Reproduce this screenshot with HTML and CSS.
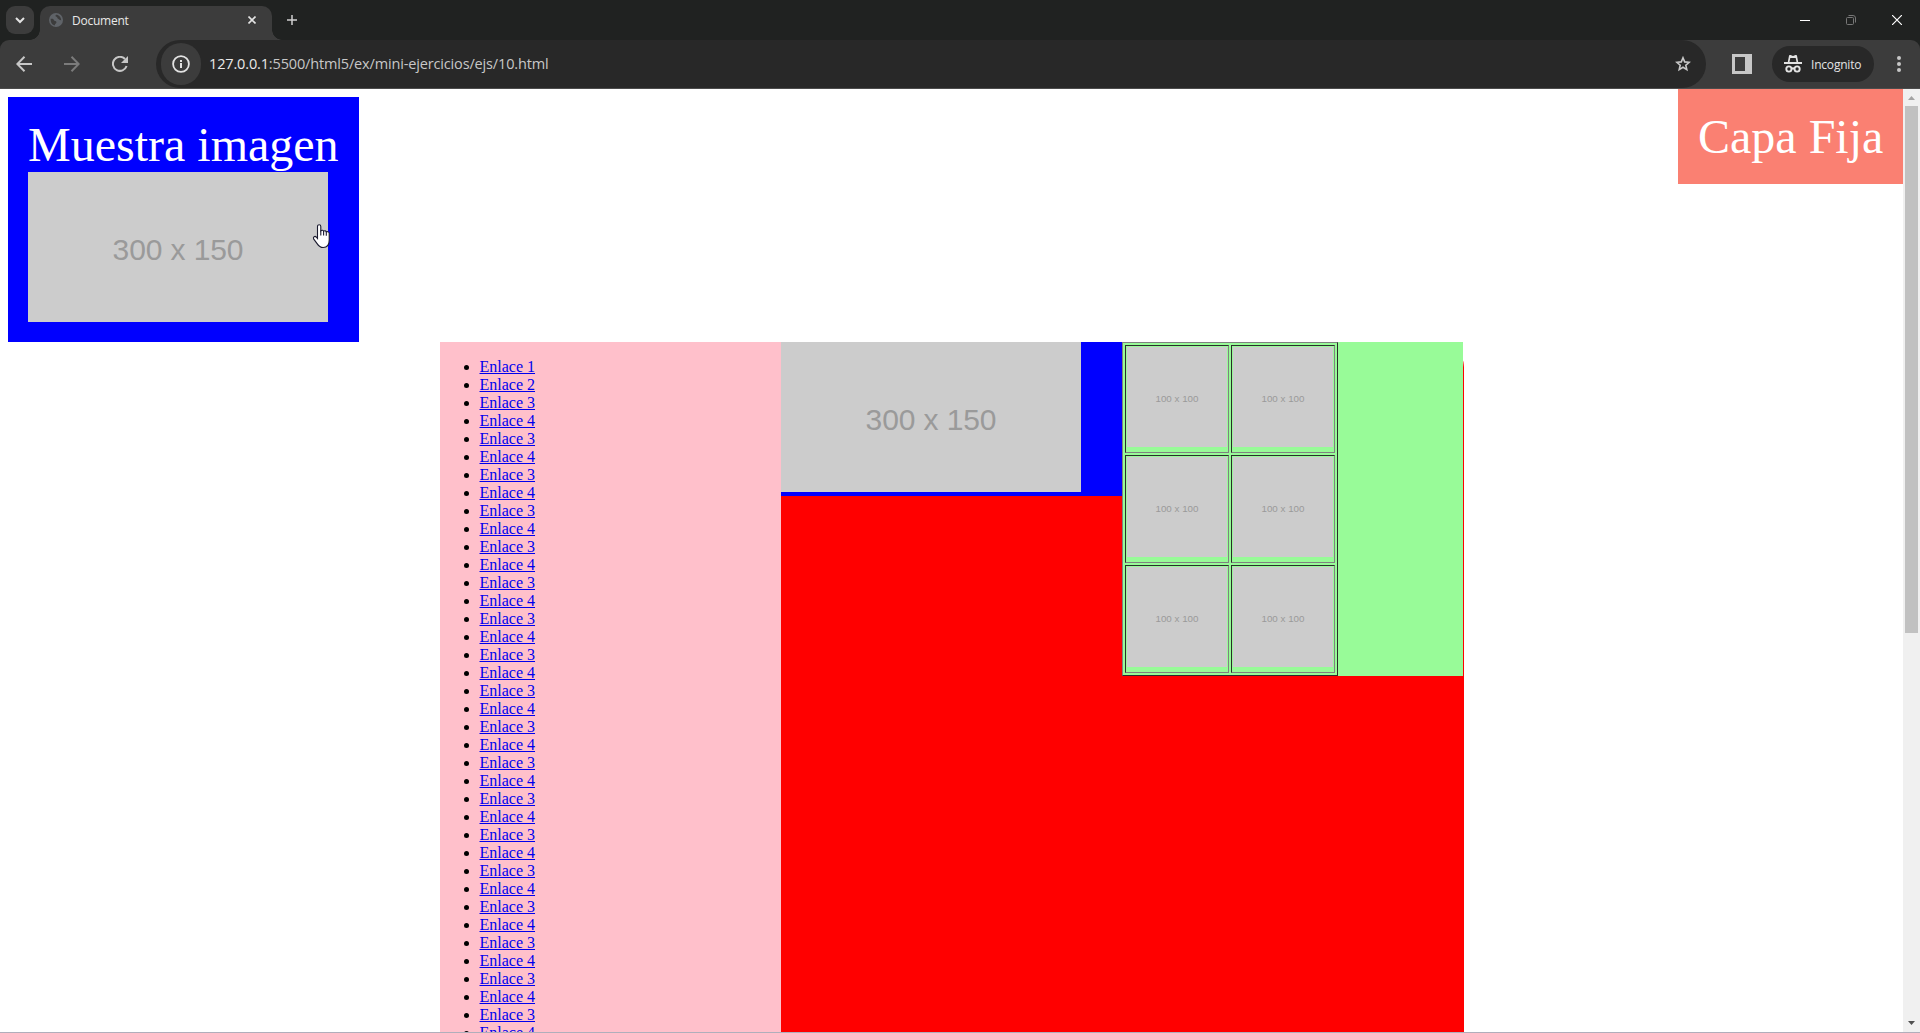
FILE: index.html
```html
<!DOCTYPE html>
<html lang="es">
<head>
<meta charset="utf-8">
<title>Document</title>
<link rel="stylesheet" href="styles.css">
</head>
<body>
<div class="browser">
  <header class="tabs">
    <button class="tab-search"><svg width="28" height="28"><path d="M10 12l4 4 4-4" fill="none" stroke="#e3e3e3" stroke-width="2"/></svg></button>
    <div class="tab">
      <svg width="14" height="14" viewBox="0 0 14 14"><circle cx="7" cy="7" r="7" fill="#5f6368"/><path d="M1.7 5.8c2.2-.5 3 .2 3.3 1.5.2 1 2.7.4 2.4 2.3-.2 1.1-1.5 1-1.6 2.8C3 12 1.4 9.500 1.700 5.800zM7 1.800c-.9 1-.6 1.700.5 1.900 1.200.3.5 1.600 1.400 1.900 1 .4 1.100 1.600 3.300 1.600C12.200 4.500 10 1.800 7 1.800z" fill="#3c3c3c"/></svg>
      <span class="tab-title">Document</span>
      <svg class="tab-close" width="8" height="8"><path d="M.5.5l7 7m0-7l-7 7" stroke="#e3e3e3" stroke-width="1.600"/></svg>
    </div>
    <svg class="new-tab" width="10" height="10"><path d="M5 0v10M0 5h10" stroke="#d0d0d0" stroke-width="1.500"/></svg>
    <div class="window-buttons">
      <svg width="10" height="10"><path d="M0 5.500h10" stroke="#fff"/></svg>
      <svg width="10" height="10"><rect x=".5" y="2.500" width="7" height="7" rx="1" fill="none" stroke="#777"/><path d="M2.500.5H7a2.500 2.500 0 0 1 2.500 2.500v4.500" fill="none" stroke="#777"/></svg>
      <svg width="10" height="10"><path d="M0 0l10 10M10 0L0 10" stroke="#fff" stroke-width="1.200"/></svg>
    </div>
  </header>
  <nav class="toolbar">
    <svg class="nav-icon" width="16" height="16"><path d="M16 8H1.500M8.500 .8L1.300 8l7.200 7.200" fill="none" stroke="#c7c7c7" stroke-width="2"/></svg>
    <svg class="nav-icon" width="16" height="16"><path d="M0 8h14.500M7.500.8L14.700 8l-7.200 7.200" fill="none" stroke="#7b7b7b" stroke-width="2"/></svg>
    <svg class="nav-icon" width="16" height="16"><path d="M14.600 10A7 7 0 1 1 13 3" fill="none" stroke="#c7c7c7" stroke-width="2"/><path d="M16 0v7H9z" fill="#c7c7c7"/></svg>
    <div class="omnibox">
      <span class="site-info"><svg width="18" height="18"><circle cx="9" cy="9" r="7.900" fill="none" stroke="#e3e3e3" stroke-width="1.800"/><path d="M9 8v5M9 5v2" stroke="#e3e3e3" stroke-width="2"/></svg></span>
      <span class="url"><b>127.0.0.1</b>:5500/html5/ex/mini-ejercicios/ejs/10.html</span>
      <svg class="star" width="16" height="16"><path d="M8 1.800l1.700 4.100 4.500.4-3.400 2.900 1 4.400L8 11.300l-3.800 2.300 1-4.400L1.800 6.300l4.500-.4z" fill="none" stroke="#c7c7c7" stroke-width="1.600"/></svg>
    </div>
    <svg class="side-panel" width="20" height="20"><path d="M0 0h20v20H0zM3 3v14h10V3z" fill="#c7c7c7" fill-rule="evenodd"/></svg>
    <div class="incognito">
      <svg width="18" height="18" viewBox="0 0 18 18"><path d="M5 .8c.3-.8.800-1 1.500-.7l2.500.8 2.500-.8c.7-.3 1.200-.1 1.500.7L14.200 7H18v2H0V7h3.800zM6.300 3l-.8 4h7l-.8-4z" fill="#e3e3e3" fill-rule="evenodd"/><g fill="none" stroke="#e3e3e3" stroke-width="1.900"><circle cx="4.900" cy="14" r="2.600"/><circle cx="13.100" cy="14" r="2.600"/><path d="M7.500 14c.8-.7 2.200-.7 3 0"/></g></svg>
      <span>Incognito</span>
    </div>
    <svg class="menu" width="4" height="16"><g fill="#c7c7c7"><circle cx="2" cy="2" r="2"/><circle cx="2" cy="8" r="2"/><circle cx="2" cy="14" r="2"/></g></svg>
  </nav>
  <div class="viewport">
    <main class="page">
      <div class="reveal">Muestra imagen<div class="ph ph-large"><span>300 x 150</span></div></div>
      <div class="container">
        <ul class="links">
          <li><a href="#">Enlace 1</a></li><li><a href="#">Enlace 2</a></li>
          <li><a href="#">Enlace 3</a></li><li><a href="#">Enlace 4</a></li>
          <li><a href="#">Enlace 3</a></li><li><a href="#">Enlace 4</a></li>
          <li><a href="#">Enlace 3</a></li><li><a href="#">Enlace 4</a></li>
          <li><a href="#">Enlace 3</a></li><li><a href="#">Enlace 4</a></li>
          <li><a href="#">Enlace 3</a></li><li><a href="#">Enlace 4</a></li>
          <li><a href="#">Enlace 3</a></li><li><a href="#">Enlace 4</a></li>
          <li><a href="#">Enlace 3</a></li><li><a href="#">Enlace 4</a></li>
          <li><a href="#">Enlace 3</a></li><li><a href="#">Enlace 4</a></li>
          <li><a href="#">Enlace 3</a></li><li><a href="#">Enlace 4</a></li>
          <li><a href="#">Enlace 3</a></li><li><a href="#">Enlace 4</a></li>
          <li><a href="#">Enlace 3</a></li><li><a href="#">Enlace 4</a></li>
          <li><a href="#">Enlace 3</a></li><li><a href="#">Enlace 4</a></li>
          <li><a href="#">Enlace 3</a></li><li><a href="#">Enlace 4</a></li>
          <li><a href="#">Enlace 3</a></li><li><a href="#">Enlace 4</a></li>
          <li><a href="#">Enlace 3</a></li><li><a href="#">Enlace 4</a></li>
          <li><a href="#">Enlace 3</a></li><li><a href="#">Enlace 4</a></li>
          <li><a href="#">Enlace 3</a></li><li><a href="#">Enlace 4</a></li>
          <li><a href="#">Enlace 3</a></li><li><a href="#">Enlace 4</a></li>
        </ul>
        <div class="picture"><div class="ph ph-large"><span>300 x 150</span></div></div>
        <div class="gallery">
          <table>
            <tr><td><div class="ph ph-small"><span>100 x 100</span></div></td><td><div class="ph ph-small"><span>100 x 100</span></div></td></tr>
            <tr><td><div class="ph ph-small"><span>100 x 100</span></div></td><td><div class="ph ph-small"><span>100 x 100</span></div></td></tr>
            <tr><td><div class="ph ph-small"><span>100 x 100</span></div></td><td><div class="ph ph-small"><span>100 x 100</span></div></td></tr>
          </table>
        </div>
      </div>
      <div class="fixed-layer">Capa Fija</div>
    </main>
    <div class="scrollbar">
      <svg width="17" height="17"><path d="M5 11l3.500-4 3.500 4z" fill="#a3a3a3"/></svg>
      <div class="thumb"></div>
      <svg class="down" width="17" height="17"><path d="M5 6l3.500 4L12 6z" fill="#505050"/></svg>
    </div>
  </div>
  <svg class="cursor" width="19" height="25" viewBox="0 0 19 25"><path d="M5.500 14.500V2.500c0-2.400 3.300-2.400 3.300 0v4.300c1-.9 2.500-.6 2.800.3 1-.6 2.400-.3 2.700.7 1.500-.6 2.900.2 2.900 1.800v6.400c0 4.700-2.400 7.500-6 7.500-3.500 0-4.700-1.600-6.100-3.900L1.600 14.900c-.8-1.900 1.300-3.200 2.600-1.900z" fill="#fff" stroke="#1a1a2e" stroke-width="1.100"/><path d="M8.800 6.500v5M11.600 7v4.500M14.300 8v3.700" stroke="#1a1a2e" stroke-width="1.100"/></svg>
</div>
</body>
</html>
```
FILE: styles.css
```css
* { box-sizing: border-box; }
body { margin: 0; overflow: hidden; }
svg { display: block; flex: none; }

.browser {
  position: relative;
  height: 1033px;
  display: flex;
  flex-direction: column;
  background: #202221;
  border-bottom: 1px solid #b0aebb;
  overflow: hidden;
}

/* Tab strip */
.tabs {
  height: 40px;
  flex: none;
  display: flex;
  padding: 6px 18px 0 6px;
  font: 12px "Open Sans", "Noto Sans", sans-serif;
  color: #e8e8e8;
}
.tab-search {
  width: 28px;
  height: 28px;
  border: 0;
  padding: 0;
  border-radius: 9px;
  background: #3c3c3c;
}
.tab {
  position: relative;
  width: 232px;
  height: 34px;
  margin-left: 6px;
  padding: 0 16px 6px 9px;
  display: flex;
  align-items: center;
  gap: 9px;
  background: #3c3c3c;
  border-radius: 10px 10px 0 0;
}
.tab::before,
.tab::after {
  content: "";
  position: absolute;
  bottom: 0;
  width: 10px;
  height: 10px;
}
.tab::before { left: -10px; background: radial-gradient(circle at 0 0, transparent 9.5px, #3c3c3c 10px); }
.tab::after { right: -10px; background: radial-gradient(circle at 100% 0, transparent 9.5px, #3c3c3c 10px); }
.tab-title { line-height: 28px; padding-top: 1px; letter-spacing: -0.25px; }
.tab-close { margin-left: auto; }
.new-tab { margin: 9px 0 0 15px; }
.window-buttons { display: flex; gap: 36px; margin: 9px 0 0 auto; }

/* Toolbar */
.toolbar {
  height: 49px;
  flex: none;
  display: flex;
  align-items: center;
  padding: 0 19px 0 16px;
  background: #3c3c3c;
  border-bottom: 1px solid #4c4c4c;
  border-radius: 9px 9px 0 0;
  color: #e3e3e3;
}
.nav-icon { margin-right: 32px; }
.nav-icon:nth-child(3) { margin-right: 28px; }
.omnibox {
  width: 1550px;
  height: 48px;
  padding: 0 15px 0 5px;
  display: flex;
  align-items: center;
  border-radius: 24px;
  background: #282828;
}
.site-info {
  width: 40px;
  height: 42px;
  display: grid;
  place-items: center;
  border-radius: 20px;
  background: #3c3c3c;
}
.url {
  margin-left: 8px;
  padding-bottom: 2px;
  font: 14.5px "Open Sans", "Noto Sans", sans-serif;
  letter-spacing: -0.15px;
  color: #c7c7c7;
  white-space: nowrap;
}
.url b { font-weight: 400; color: #e8e8e8; }
.star { margin-left: auto; }
.side-panel { margin-left: 26px; }
.incognito {
  width: 102px;
  height: 36px;
  margin-left: 20px;
  padding-left: 12px;
  display: flex;
  align-items: center;
  gap: 9px;
  border-radius: 18px;
  background: #282828;
  font: 12px "Open Sans", "Noto Sans", sans-serif;
  letter-spacing: -0.2px;
}
.menu { margin-left: auto; }

/* Page */
.viewport { flex: 1; min-height: 0; display: flex; background: #fff; }
.page {
  position: relative;
  flex: 1;
  padding: 8px;
  overflow: hidden;
  font: 16px/18px "Liberation Serif", "Times New Roman", serif;
}
.reveal,
.fixed-layer {
  padding: 20px;
  color: #fff;
  font-size: 48px;
  line-height: 55px;
  white-space: nowrap;
}
.reveal { width: 351px; height: 245px; background: #00f; }
.fixed-layer { position: absolute; top: 0; right: 0; width: 225px; background: salmon; }
.container {
  width: 1024px;
  margin-left: 432px;
  display: grid;
  grid-template-columns: repeat(3, 341px);
  align-items: start;
  background: red;
  border-radius: 25px;
}
.links { margin: 0; padding: 16px 0 16px 39.5px; background: pink; }
.links a { color: #00e; text-decoration: underline; }
.picture { height: 154px; background: #00f; }
.gallery { background: palegreen; }
table { border: 1px solid; border-color: #808080 #2c2c2c #2c2c2c #808080; border-spacing: 2px; }
td { height: 108px; padding: 1px; vertical-align: top; border: 1px solid; border-color: #2c2c2c #808080 #808080 #2c2c2c; }

.ph {
  display: grid;
  place-items: center;
  background: #ccc;
  color: #9a9a9a;
  font-family: "Liberation Sans", Arial, sans-serif;
}
.ph-large { width: 300px; height: 150px; padding-top: 6px; font-size: 30px; line-height: 34px; letter-spacing: -0.1px; }
.ph-small { width: 100px; height: 100px; padding-top: 3px; font-size: 9.8px; line-height: 12px; }

.scrollbar { width: 17px; display: flex; flex-direction: column; background: #f0f0f0; }
.thumb { width: 13px; height: 527px; margin-left: 2px; background: #c1c1c1; }
.down { margin-top: auto; }

.cursor { position: absolute; left: 312px; top: 224px; }
```
